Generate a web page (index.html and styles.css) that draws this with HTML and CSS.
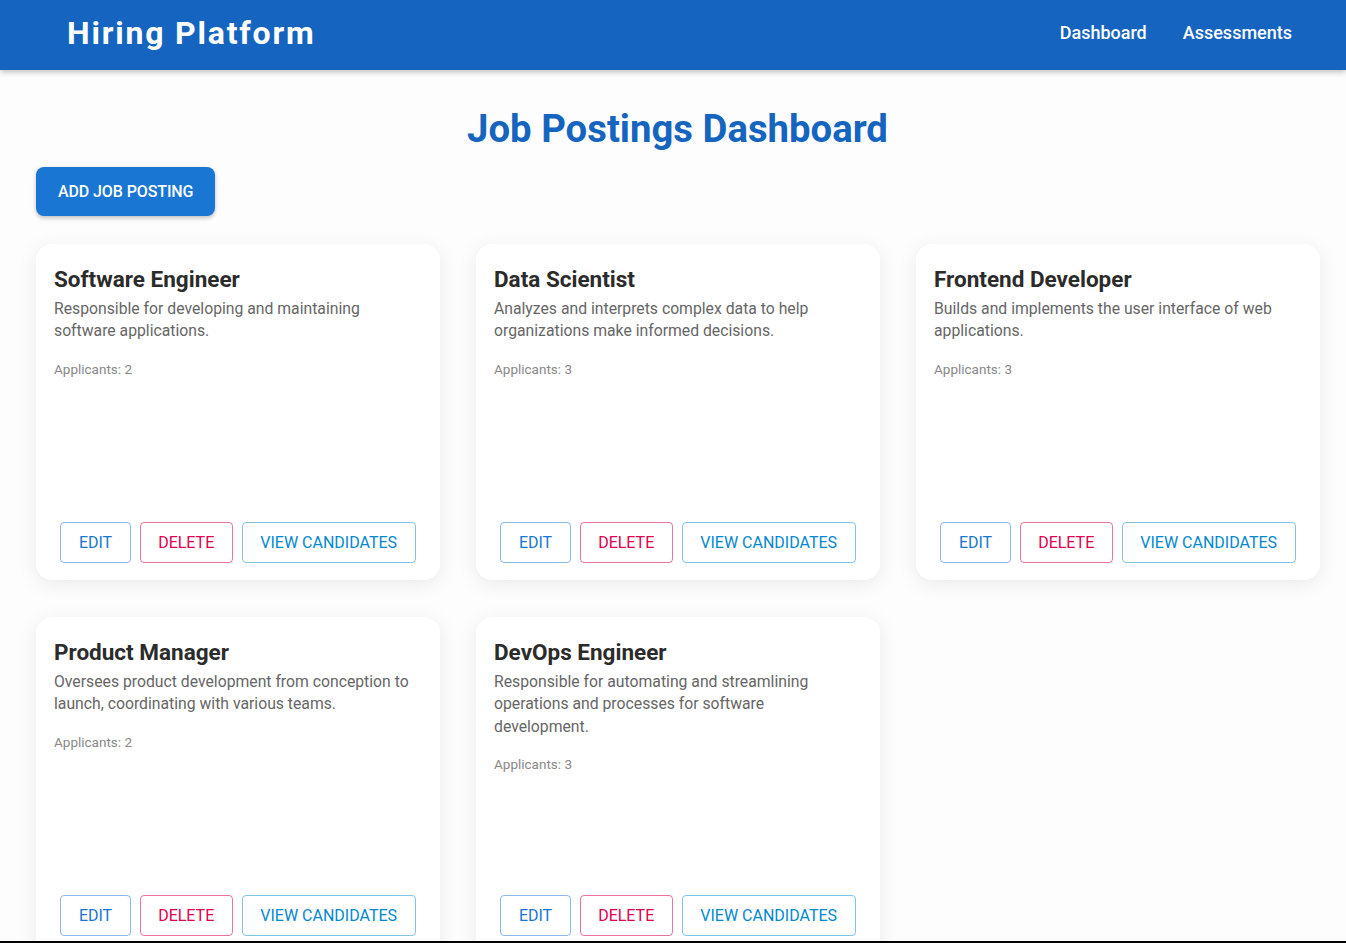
FILE: index.html
```html
<!DOCTYPE html>
<html lang="en">
<head>
<meta charset="utf-8">
<title>Hiring Platform</title>
<link rel="stylesheet" href="styles.css">
</head>
<body>
<header class="topbar">
  <div class="brand">Hiring Platform</div>
  <nav class="nav">
    <a class="nav-link" href="#">Dashboard</a>
    <a class="nav-link" href="#">Assessments</a>
  </nav>
</header>
<main class="page">
  <h1 class="page-title">Job Postings Dashboard</h1>
  <button class="add-btn">ADD JOB POSTING</button>
  <section class="grid">
    <article class="card">
      <h2 class="card-title">Software Engineer</h2>
      <p class="card-desc">Responsible for developing and maintaining software applications.</p>
      <p class="card-meta">Applicants: 2</p>
      <div class="card-actions">
        <button class="btn btn-edit">EDIT</button>
        <button class="btn btn-delete">DELETE</button>
        <button class="btn btn-view">VIEW CANDIDATES</button>
      </div>
    </article>
    <article class="card">
      <h2 class="card-title">Data Scientist</h2>
      <p class="card-desc">Analyzes and interprets complex data to help organizations make informed decisions.</p>
      <p class="card-meta">Applicants: 3</p>
      <div class="card-actions">
        <button class="btn btn-edit">EDIT</button>
        <button class="btn btn-delete">DELETE</button>
        <button class="btn btn-view">VIEW CANDIDATES</button>
      </div>
    </article>
    <article class="card">
      <h2 class="card-title">Frontend Developer</h2>
      <p class="card-desc">Builds and implements the user interface of web applications.</p>
      <p class="card-meta">Applicants: 3</p>
      <div class="card-actions">
        <button class="btn btn-edit">EDIT</button>
        <button class="btn btn-delete">DELETE</button>
        <button class="btn btn-view">VIEW CANDIDATES</button>
      </div>
    </article>
    <article class="card">
      <h2 class="card-title">Product Manager</h2>
      <p class="card-desc">Oversees product development from conception to launch, coordinating with various teams.</p>
      <p class="card-meta">Applicants: 2</p>
      <div class="card-actions">
        <button class="btn btn-edit">EDIT</button>
        <button class="btn btn-delete">DELETE</button>
        <button class="btn btn-view">VIEW CANDIDATES</button>
      </div>
    </article>
    <article class="card">
      <h2 class="card-title">DevOps Engineer</h2>
      <p class="card-desc">Responsible for automating and streamlining operations and processes for software development.</p>
      <p class="card-meta">Applicants: 3</p>
      <div class="card-actions">
        <button class="btn btn-edit">EDIT</button>
        <button class="btn btn-delete">DELETE</button>
        <button class="btn btn-view">VIEW CANDIDATES</button>
      </div>
    </article>
  </section>
</main>
</body>
</html>
```
FILE: styles.css
```css
* { box-sizing: border-box; }

html, body {
  margin: 0;
  padding: 0;
}

body {
  font-family: Roboto, "Liberation Sans", Arial, sans-serif;
  background: #fdfdfd;
  color: #333;
}

body::after {
  content: "";
  position: fixed;
  left: 0;
  right: 0;
  bottom: 0;
  height: 2px;
  background: #000;
}

.topbar {
  height: 70px;
  background: #1565c0;
  color: #fff;
  display: flex;
  align-items: center;
  justify-content: space-between;
  padding: 0 54px 4px 67px;
  box-shadow: 0 2px 6px rgba(0, 0, 0, 0.25);
  position: relative;
  z-index: 1;
}

.brand {
  font-size: 32px;
  font-weight: 700;
  letter-spacing: 1.8px;
}

.nav {
  display: flex;
  gap: 36px;
  padding-bottom: 1px;
}

.nav-link {
  color: #fff;
  text-decoration: none;
  font-size: 18px;
  font-weight: 500;
}

.page {
  padding: 0 27px 0 36px;
}

.page-title {
  margin: 0;
  padding-top: 36px;
  text-align: center;
  font-size: 38.3px;
  font-weight: 700;
  color: #1565c0;
  line-height: 46px;
}

.add-btn {
  margin-top: 15px;
  height: 49px;
  padding: 0 22px;
  border: none;
  border-radius: 8px;
  background: #1976d2;
  color: #fff;
  font-family: inherit;
  font-size: 16px;
  font-weight: 500;
  letter-spacing: -0.1px;
  box-shadow: 0 2px 4px rgba(0, 0, 0, 0.25);
}

.grid {
  margin-top: 28px;
  display: grid;
  grid-template-columns: repeat(3, 404px);
  column-gap: 36px;
  row-gap: 37px;
}

.card {
  height: 336px;
  background: #fff;
  border-radius: 16px;
  box-shadow: 0 4px 20px rgba(0, 0, 0, 0.08);
  padding: 20px 18px 17px;
  display: flex;
  flex-direction: column;
}

.card-title {
  margin: 0;
  font-size: 22.5px;
  font-weight: 700;
  color: #2b2b2b;
  line-height: 30px;
}

.card-desc {
  margin: 4px 0 0;
  font-size: 15.75px;
  line-height: 22.4px;
  color: #666;
}

.card-meta {
  margin: 17px 0 0;
  font-size: 13.5px;
  line-height: 18px;
  color: #888;
}

.card-actions {
  margin-top: auto;
  display: flex;
  justify-content: center;
  gap: 9px;
}

.btn {
  height: 41px;
  padding: 0 17.5px;
  background: transparent;
  border: 1px solid;
  border-radius: 4px;
  font-family: inherit;
  font-size: 16px;
  font-weight: 400;
  letter-spacing: 0;
  white-space: nowrap;
}

.btn-edit {
  color: #1976d2;
  border-color: rgba(25, 118, 210, 0.5);
}

.btn-delete {
  color: #dc004e;
  border-color: rgba(220, 0, 78, 0.55);
}

.btn-view {
  color: #0288d1;
  border-color: rgba(2, 136, 209, 0.5);
}
```
